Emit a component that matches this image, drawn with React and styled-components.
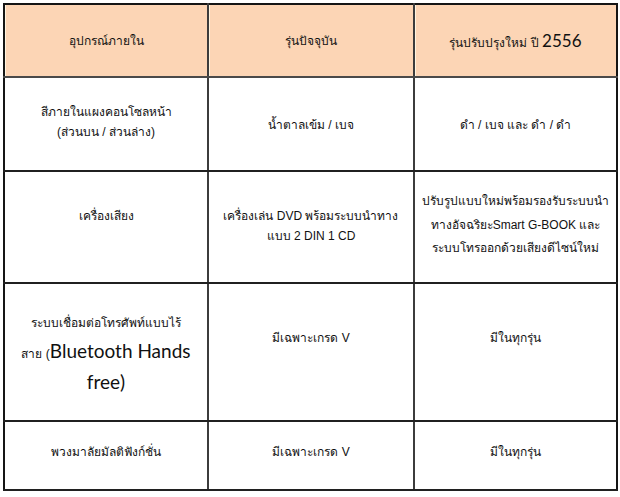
import React from 'react'
import styled, { createGlobalStyle } from 'styled-components'

const Global = createGlobalStyle`
  html, body {
    margin: 0;
    padding: 0;
    background: #ffffff;
  }
  body {
    padding: 3px 0 0 3px;
    font-family: Tahoma, "Liberation Sans", "Noto Sans", sans-serif;
    color: #111;
  }
`

const Table = styled.table`
  width: 613px;
  border-collapse: collapse;
  table-layout: fixed;
  border: 2px solid #151515;
  font-size: 12px;
`

const Row = styled.tr`
  height: ${p => p.h}px;
`

const HeadCell = styled.th`
  background: #fcd5b5;
  font-weight: normal;
  border-right: 2px solid #3c3c3c;
  border-bottom: 2px solid #4a4a4a;
  box-shadow: inset 1px 0 0 #fff4e0;
  vertical-align: top;
  text-align: center;
  padding: 26px 2px 0;
  line-height: 20px;
  white-space: nowrap;
  &:last-child {
    border-right: none;
  }
`

const Cell = styled.td`
  border-right: 2px solid #3c3c3c;
  border-bottom: 2px solid #202020;
  vertical-align: top;
  text-align: center;
  padding: ${p => p.top}px 2px 0;
  line-height: ${p => p.lh || 20}px;
  white-space: nowrap;
  &:last-child {
    border-right: none;
  }
`

const Big = styled.span`
  font-family: Lato, "Open Sans", sans-serif;
  font-size: ${p => p.size || 19}px;
`

const rows = [
  {
    h: 94,
    cells: [
      { top: 24, text: <>สีภายในแผงคอนโซลหน้า<br />(ส่วนบน / ส่วนล่าง)</> },
      { top: 37, text: 'น้ำตาลเข้ม / เบจ' },
      { top: 37, text: 'ดำ / เบจ และ ดำ / ดำ' },
    ],
  },
  {
    h: 112,
    cells: [
      { top: 34, text: 'เครื่องเสียง' },
      { top: 34, text: <>เครื่องเล่น DVD พร้อมระบบนำทาง<br />แบบ 2 DIN 1 CD</> },
      {
        top: 18,
        lh: 23.5,
        text: <>ปรับรูปแบบใหม่พร้อมรองรับระบบนำ<br />ทางอัจฉริยะSmart G-BOOK และ<br />ระบบโทรออกด้วยเสียงดีไซน์ใหม่</>,
      },
    ],
  },
  {
    h: 138,
    cells: [
      {
        top: 25,
        lh: 28,
        text: <>ระบบเชื่อมต่อโทรศัพท์แบบไร้<br />สาย (<Big>Bluetooth Hands</Big><br /><Big>free)</Big></>,
      },
      { top: 44, text: 'มีเฉพาะเกรด V' },
      { top: 44, text: 'มีในทุกรุ่น' },
    ],
  },
  {
    h: 69,
    cells: [
      { top: 20, text: 'พวงมาลัยมัลติฟังก์ชั่น' },
      { top: 20, text: 'มีเฉพาะเกรด V' },
      { top: 20, text: 'มีในทุกรุ่น' },
    ],
  },
]

export default function App() {
  return (
    <>
      <Global />
      <Table>
        <colgroup>
          <col style={{ width: 204 }} />
          <col style={{ width: 206 }} />
          <col style={{ width: 203 }} />
        </colgroup>
        <thead>
          <Row h={73}>
            <HeadCell>อุปกรณ์ภายใน</HeadCell>
            <HeadCell>รุ่นปัจจุบัน</HeadCell>
            <HeadCell>
              รุ่นปรับปรุงใหม่ ปี <Big size={17}>2556</Big>
            </HeadCell>
          </Row>
        </thead>
        <tbody>
          {rows.map((row, i) => (
            <Row key={i} h={row.h}>
              {row.cells.map((c, j) => (
                <Cell key={j} top={c.top} lh={c.lh}>
                  {c.text}
                </Cell>
              ))}
            </Row>
          ))}
        </tbody>
      </Table>
    </>
  )
}
